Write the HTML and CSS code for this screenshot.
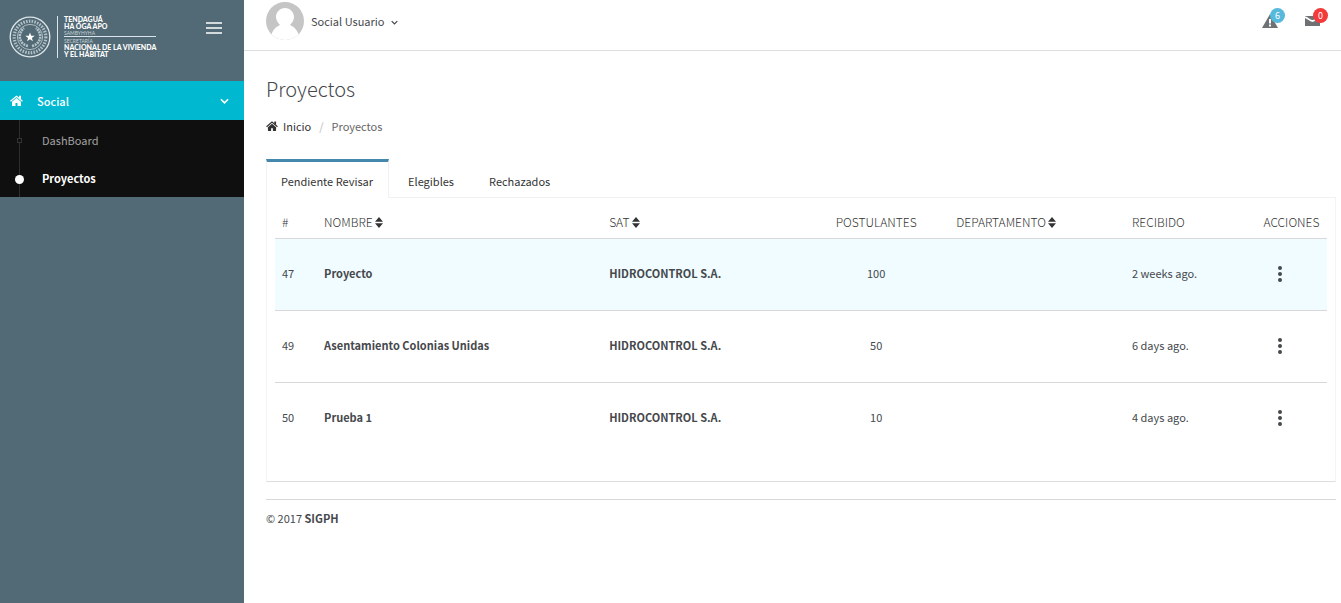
FILE: index.html
```html
<!DOCTYPE html>
<html lang="es">
<head>
<meta charset="utf-8">
<title>Proyectos</title>
<link rel="stylesheet" href="styles.css">
</head>
<body>
<svg class="defs" aria-hidden="true">
  <symbol id="home" viewBox="0 0 26 22"><path d="M13 6 4 13.500V21a1 1 0 0 0 1 1h6v-6h4v6h6a1 1 0 0 0 1-1v-7.500z"/><path d="M18 1.300h4V9l-4-3z"/><path d="m1 12.500 12-10 12 10" fill="none" stroke="currentColor" stroke-width="2.600"/></symbol>
  <symbol id="sort" viewBox="0 0 8 11"><path d="M0 4.800 4 0l4 4.800zM0 6.200h8L4 11z"/></symbol>
  <symbol id="dots" viewBox="0 0 4 16"><circle cx="2" cy="2" r="2"/><circle cx="2" cy="8" r="2"/><circle cx="2" cy="14" r="2"/></symbol>
  <symbol id="chevron" viewBox="0 0 10 6"><path d="m1 1 4 4 4-4" fill="none" stroke="currentColor" stroke-width="1.800"/></symbol>
</svg>
<div class="app">
  <aside class="sidebar">
    <div class="brand">
      <a class="logo" href="#">
        <svg class="seal" viewBox="0 0 42 42" aria-hidden="true">
          <circle cx="21" cy="21" r="19.800" fill="none" stroke="#dbe4e8" stroke-width="1.300"/>
          <circle cx="21" cy="21" r="15.800" fill="none" stroke="#b3c2c9" stroke-width="3.200" stroke-dasharray="1.500 1.300"/>
          <circle cx="21" cy="21" r="12.600" fill="none" stroke="#c5d1d6" stroke-width=".8"/>
          <path d="M19 30C10 28 8 18 15 12M23 30c9-2 11-12 4-18" fill="none" stroke="#b3c2c9" stroke-width="2.600" stroke-dasharray="2 .8"/>
          <path d="m21 16.500 1.200 3.300h3.500l-2.800 2.100 1 3.400-2.900-2-2.900 2 1-3.400-2.800-2.100h3.500z" fill="#fff"/>
        </svg>
        <span class="names">
          <span class="name">TENDAGUÁ</span>
          <span class="name">HA ÓGA APO</span>
          <span class="sub">SAMBYHYHA</span>
          <span class="rule"></span>
          <span class="sub">SECRETARÍA</span>
          <span class="name">NACIONAL DE LA VIVIENDA</span>
          <span class="name">Y EL HÁBITAT</span>
        </span>
      </a>
      <button class="burger" type="button" aria-label="Menú"><i></i><i></i><i></i></button>
    </div>
    <nav class="menu">
      <a class="menu-head" href="#"><svg class="home-light"><use href="#home"/></svg><span>Social</span><svg class="arrow"><use href="#chevron"/></svg></a>
      <ul class="submenu">
        <li><a href="#"><span class="node"></span>DashBoard</a></li>
        <li><a class="current" href="#"><span class="node"></span>Proyectos</a></li>
      </ul>
    </nav>
  </aside>
  <div class="page">
    <header class="topbar">
      <button class="user" type="button">
        <svg class="avatar" viewBox="0 0 38 38" aria-hidden="true"><clipPath id="face"><circle cx="19" cy="19" r="19"/></clipPath><g clip-path="url(#face)"><path fill="#c5c5c5" d="M0 0h38v38H0z"/><path fill="#fff" d="M4 38c1-8 5-13 10-15-2-2-4-5-4-8 0-5 4-9 9-9s9 4 9 9c0 3-2 6-4 8 5 2 9 7 10 15z"/></g></svg>
        <span>Social Usuario</span><svg class="caret"><use href="#chevron"/></svg>
      </button>
      <div class="alerts">
        <button class="alert" type="button" aria-label="Alertas"><svg class="warn" viewBox="0 0 16 14"><path fill="#6f7274" d="M8 0 16 14H0z"/><path stroke="#fff" stroke-width="2" d="M8 5v4.500M8 10.500v2"/></svg><span class="badge info">6</span></button>
        <button class="alert" type="button" aria-label="Mensajes"><svg class="mail" viewBox="0 0 15 10"><path fill="#6f7274" d="M0 0h15v10H0z"/><path fill="none" stroke="#fff" stroke-width="1.800" d="M0 1c3 1 5 4 7.500 4S12 2 15 1"/></svg><span class="badge danger">0</span></button>
      </div>
    </header>
    <main class="content">
      <h1>Proyectos</h1>
      <nav class="crumbs"><a href="#"><svg class="home-dark"><use href="#home"/></svg>Inicio</a><span class="slash">/</span><span>Proyectos</span></nav>
      <div class="tabs">
        <a class="tab active" href="#">Pendiente Revisar</a><a class="tab" href="#">Elegibles</a><a class="tab" href="#">Rechazados</a>
      </div>
      <section class="panel">
        <table>
          <colgroup><col class="c-id"><col class="c-name"><col class="c-sat"><col class="c-post"><col class="c-dep"><col class="c-rec"><col></colgroup>
          <thead><tr><th>#</th><th>NOMBRE<svg class="sort"><use href="#sort"/></svg></th><th>SAT<svg class="sort"><use href="#sort"/></svg></th><th class="center">POSTULANTES</th><th>DEPARTAMENTO<svg class="sort"><use href="#sort"/></svg></th><th>RECIBIDO</th><th>ACCIONES</th></tr></thead>
          <tbody>
            <tr class="hover"><td>47</td><td class="strong">Proyecto</td><td class="strong">HIDROCONTROL S.A.</td><td class="center">100</td><td></td><td>2 weeks ago.</td><td><button class="more" type="button" aria-label="Acciones"><svg><use href="#dots"/></svg></button></td></tr>
            <tr><td>49</td><td class="strong">Asentamiento Colonias Unidas</td><td class="strong">HIDROCONTROL S.A.</td><td class="center">50</td><td></td><td>6 days ago.</td><td><button class="more" type="button" aria-label="Acciones"><svg><use href="#dots"/></svg></button></td></tr>
            <tr><td>50</td><td class="strong">Prueba 1</td><td class="strong">HIDROCONTROL S.A.</td><td class="center">10</td><td></td><td>4 days ago.</td><td><button class="more" type="button" aria-label="Acciones"><svg><use href="#dots"/></svg></button></td></tr>
          </tbody>
        </table>
      </section>
      <footer>© 2017 <b>SIGPH</b></footer>
    </main>
  </div>
</div>
</body>
</html>
```
FILE: styles.css
```css
* { box-sizing: border-box; }
body { margin: 0; background: #fff; color: #45484c; font: 11px/18px "Noto Sans CJK SC", "Noto Sans", sans-serif; }
a { color: inherit; text-decoration: none; }
button { font: inherit; color: inherit; background: none; border: 0; padding: 0; cursor: pointer; }
svg { display: block; fill: currentColor; flex: none; }
.defs { position: absolute; width: 0; height: 0; }

.app { display: grid; grid-template-columns: 244px 1fr; min-height: 100vh; }

.sidebar { background: #526a75; }
.brand { display: flex; justify-content: space-between; align-items: flex-start; height: 81px; padding: 16px 22px 0 9px; }
.logo { display: flex; color: #fff; }
.seal { width: 42px; height: 42px; }
.names { display: flex; flex-direction: column; margin-left: 6px; padding-left: 6px; border-left: 1px solid #dbe4e8; font-family: Lato, sans-serif; white-space: nowrap; }
.name { font-size: 7px; line-height: 7px; font-weight: 900; }
.sub { font-size: 5px; line-height: 6px; color: #c5d1d6; }
.rule { height: 1px; background: #dbe4e8; margin-bottom: 1px; }
.burger { display: grid; gap: 3px; margin-top: 6px; }
.burger i { width: 16px; height: 2px; background: #d3dade; }

.menu-head { display: flex; align-items: center; height: 39px; padding: 0 15px 0 10px; background: #00b8d0; color: #fff; font-weight: 500; }
.home-light { width: 13px; height: 11px; margin-right: 14px; }
.arrow { width: 9px; height: 6px; margin-left: auto; }
.submenu { list-style: none; margin: 0; padding: 0; background: #0f0f0f; }
.submenu a { position: relative; display: flex; align-items: center; height: 38px; padding-left: 42px; color: #a3a3a3; }
.submenu li:first-child a { height: 39px; }
.submenu a::before { content: ""; position: absolute; left: 19px; top: 0; bottom: 0; width: 1px; background: #2e2e2e; }
.node { position: absolute; left: 17px; top: 18px; width: 5px; height: 5px; background: #0f0f0f; border: 1px solid #333; }
.submenu .current { color: #fff; font-weight: 600; }
.current .node { left: 15px; top: 16px; width: 9px; height: 9px; border: 0; border-radius: 50%; background: #fff; }

.topbar { display: flex; justify-content: space-between; align-items: flex-start; height: 51px; padding: 2px 13px 0 22px; border-bottom: 1px solid #dcdfe0; }
.user { display: flex; align-items: center; }
.avatar { width: 38px; height: 38px; margin-right: 7px; }
.caret { width: 7px; height: 5px; margin: 3px 0 0 6px; }
.alerts { display: flex; gap: 20px; padding-top: 6px; }
.alert { position: relative; width: 23px; height: 20px; display: flex; align-items: flex-end; }
.warn { width: 16px; height: 14px; }
.mail { width: 15px; height: 10px; margin-bottom: 2px; }
.badge { position: absolute; right: 0; top: 0; width: 15px; height: 15px; border-radius: 50%; color: #fff; font-size: 9px; line-height: 15px; text-align: center; }
.info { background: #57b9dc; }
.danger { background: #f23b3b; }

.content { padding: 23px 5px 0 22px; }
h1 { margin: 0; font-size: 20px; line-height: 30px; font-weight: 200; }
.crumbs { display: flex; margin-top: 13px; color: #666; }
.crumbs a { display: flex; align-items: center; color: #333; }
.home-dark { width: 12px; height: 10px; margin-right: 5px; }
.slash { margin: 0 8px; color: #bbb; }

.tabs { display: flex; height: 39px; margin-top: 24px; border-bottom: 1px solid #f1f1f1; }
.tab { margin-right: 4px; padding: 12px 15px 7px 14px; border: 1px solid transparent; border-bottom: 0; color: #333; }
.tab.active { margin-bottom: -1px; padding-top: 10px; border-color: #f1f1f1; border-top: 3px solid #4489ad; background: #fff; }
.panel { padding: 9px 8px 27px; border: 1px solid #f4f4f4; border-top: 0; border-bottom-color: #dedede; }
table { width: 100%; border-collapse: collapse; table-layout: fixed; }
.c-id { width: 4%; }
.c-name { width: 27.100%; }
.c-sat { width: 19.100%; }
.c-post { width: 13.900%; }
.c-dep { width: 16.700%; }
.c-rec { width: 12.500%; }
th, td { padding: 0 7px; text-align: left; font-weight: 400; white-space: nowrap; }
th { height: 31px; border-bottom: 1px solid #d8d8d8; font-size: 12px; font-weight: 300; color: #333; }
td { height: 72px; border-bottom: 1px solid #d8d8d8; padding-bottom: 3px; }
tr:last-child td { border-bottom: 0; }
th.center, td.center { text-align: center; }
.hover { background: #f0fcff; }
.strong, b { font-weight: 600; }
.sort { display: inline-block; width: 8px; height: 11px; margin-left: 2px; vertical-align: -1px; }
.more { display: block; padding: 2px 15px 0; }
.more svg { width: 4px; height: 16px; }
footer { margin-top: 17px; padding-top: 9px; border-top: 1px solid #d8d8d8; }
```
